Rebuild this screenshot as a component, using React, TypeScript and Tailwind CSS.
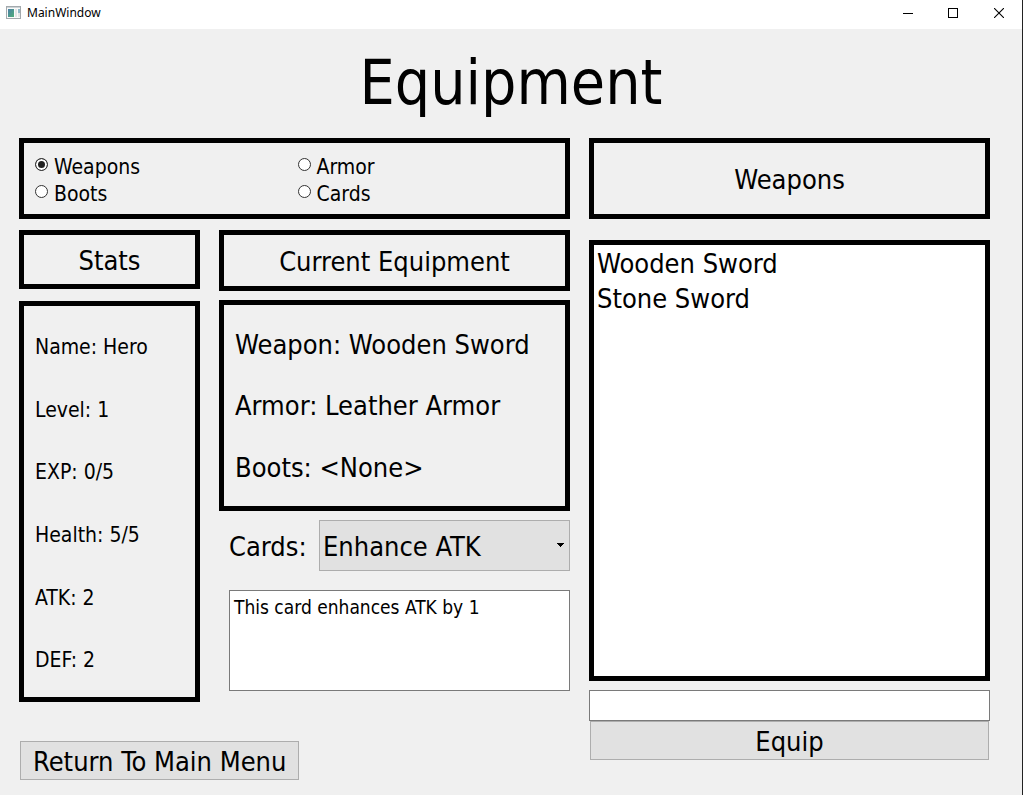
import { useState } from "react";

type Category = "Weapons" | "Armor" | "Boots" | "Cards";

const categories: Category[] = ["Weapons", "Armor", "Boots", "Cards"];

const items: Record<Category, string[]> = {
  Weapons: ["Wooden Sword", "Stone Sword"],
  Armor: ["Leather Armor"],
  Boots: [],
  Cards: ["Enhance ATK"],
};

const stats = ["Name: Hero", "Level: 1", "EXP: 0/5", "Health: 5/5", "ATK: 2", "DEF: 2"];

const equipment = ["Weapon: Wooden Sword", "Armor: Leather Armor", "Boots: <None>"];

function TitleBar() {
  return (
    <header className="flex h-[29px] shrink-0 items-center bg-white pb-[3px] pl-[6px]">
      <svg className="size-4 shrink-0" viewBox="0 0 16 16" shapeRendering="crispEdges" aria-hidden="true">
        <defs>
          <linearGradient id="pane" x1="0" y1="0" x2="1" y2="1">
            <stop offset="0" stopColor="#4a7fa8" />
            <stop offset="1" stopColor="#4fae78" />
          </linearGradient>
        </defs>
        <rect x="0.5" y="1.5" width="14" height="12" fill="#fafafa" stroke="#a3a9ad" />
        <rect x="1" y="2" width="13" height="1" fill="#ccd3d6" />
        <rect x="2" y="4" width="6" height="8" fill="url(#pane)" />
        <rect x="9" y="4" width="2" height="8" fill="#e3e5e6" />
        <rect x="12" y="4" width="2" height="4" fill="#8fb8c8" />
        <rect x="12" y="8" width="2" height="4" fill="#e3e5e6" />
      </svg>
      <span className="ml-[5px] font-['Noto_Sans',sans-serif] text-[12px] leading-4">MainWindow</span>
      <div className="ml-auto flex h-full">
        <button type="button" aria-label="Minimize" className="flex w-[45px] items-center justify-center">
          <svg width="10" height="10" viewBox="0 0 10 10" shapeRendering="crispEdges">
            <path d="M0 5.5H10" stroke="#000" />
          </svg>
        </button>
        <button type="button" aria-label="Maximize" className="flex w-[45px] items-center justify-center">
          <svg width="10" height="10" viewBox="0 0 10 10" shapeRendering="crispEdges">
            <rect x="0.5" y="0.5" width="9" height="9" fill="none" stroke="#000" />
          </svg>
        </button>
        <button type="button" aria-label="Close" className="flex w-[47px] items-center justify-center">
          <svg width="10" height="10" viewBox="0 0 10 10">
            <path d="M0 0L10 10M10 0L0 10" stroke="#000" strokeWidth="1.1" />
          </svg>
        </button>
      </div>
    </header>
  );
}

export default function App() {
  const [category, setCategory] = useState<Category>("Weapons");

  return (
    <div className="flex min-h-screen flex-col border-r border-[#222] bg-[#f0f0f0] font-['DejaVu_Sans_Condensed','Noto_Sans',sans-serif] text-[27px] leading-[35px] text-black">
      <TitleBar />
      <main className="flex flex-1 flex-col pb-[15px]">
        <h1 className="pt-[11px] pb-[13px] text-center text-[62px] leading-[85px]">Equipment</h1>
        <div className="flex items-start gap-[19px] pr-8 pl-[19px]">
          <div className="flex min-w-0 flex-[551] flex-col gap-[11px]">
            <fieldset
              aria-label="Category"
              className="grid grid-cols-2 content-start gap-x-[6px] border-5 border-black px-[11px] pt-[11px] pb-[6px]"
            >
              {categories.map((name) => (
                <label key={name} className="flex h-[27px] items-start text-[21px] leading-[27px]">
                  <input
                    type="radio"
                    name="category"
                    checked={category === name}
                    onChange={() => setCategory(name)}
                    className="mt-1 size-[13px] shrink-0 appearance-none rounded-full border border-[#333] bg-white checked:bg-[#222] checked:shadow-[inset_0_0_0_2px_white]"
                  />
                  <span className="ml-[6px]">{name}</span>
                </label>
              ))}
            </fieldset>

            <div className="flex items-start gap-[19px]">
              <section className="flex min-w-0 flex-[181] flex-col gap-3">
                <h2 className="border-5 border-black pt-2 pb-[6px] text-center">Stats</h2>
                <ul className="flex min-h-[401px] flex-col border-5 border-black px-[11px] pt-[10px] pb-[5px] text-[21px]">
                  {stats.map((line) => (
                    <li key={line} className="flex flex-1 items-center">
                      {line}
                    </li>
                  ))}
                </ul>
                <button
                  type="button"
                  className="mt-[27px] ml-[1px] self-start border border-[#adadad] bg-[#e1e1e1] px-3 pt-[2px] whitespace-nowrap"
                >
                  Return To Main Menu
                </button>
              </section>

              <section className="flex min-w-0 flex-[351] flex-col">
                <h2 className="border-5 border-black pt-[9px] pb-[7px] text-center">Current Equipment</h2>
                <ul className="mt-[9px] flex min-h-[211px] flex-col border-5 border-black px-[11px] pt-[9px] pb-2">
                  {equipment.map((line) => (
                    <li key={line} className="flex flex-1 items-center whitespace-nowrap">
                      {line}
                    </li>
                  ))}
                </ul>
                <div className="mt-[9px] flex items-center pl-[10px]">
                  <label htmlFor="card" className="w-[90px] shrink-0 pt-[2px]">
                    Cards:
                  </label>
                  <div className="relative min-w-0 flex-1">
                    <select
                      id="card"
                      className="block h-[51px] w-full appearance-none border border-[#adadad] bg-[#e1e1e1] px-[3px] pt-[2px]"
                    >
                      <option>Enhance ATK</option>
                    </select>
                    <svg
                      className="pointer-events-none absolute top-[23px] right-[6px]"
                      width="7"
                      height="4"
                      viewBox="0 0 7 4"
                      shapeRendering="crispEdges"
                      aria-hidden="true"
                    >
                      <path d="M0 0H7V1H6V2H5V3H4V4H3V3H2V2H1V1H0Z" fill="#000" />
                    </svg>
                  </div>
                </div>
                <textarea
                  readOnly
                  aria-label="Card description"
                  value="This card enhances ATK by 1"
                  className="mt-[19px] ml-[10px] block h-[101px] resize-none border border-[#7a7a7a] bg-white px-1 py-[3px] text-[19px] leading-[27px]"
                />
              </section>
            </div>
          </div>

          <section className="flex min-w-0 flex-[401] flex-col">
            <h2 className="border-5 border-black pt-[19px] pb-[17px] text-center">{category}</h2>
            <ul className="mt-[21px] h-[441px] border-5 border-black bg-white px-[3px] py-[1px]">
              {items[category].map((item) => (
                <li key={item}>{item}</li>
              ))}
            </ul>
            <input
              type="text"
              aria-label="Selected item"
              className="mt-[9px] h-[31px] border border-[#7a7a7a] bg-white px-1 text-[19px]"
            />
            <button type="button" className="mx-[1px] border border-[#adadad] bg-[#e1e1e1] pt-[2px]">
              Equip
            </button>
          </section>
        </div>
      </main>
    </div>
  );
}
